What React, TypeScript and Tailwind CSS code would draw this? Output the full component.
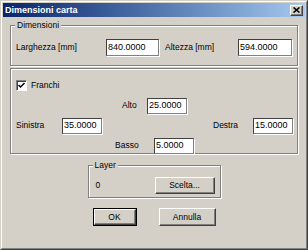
import React from "react";

const Field = ({ value, w, h = "h-[16px]" }: { value: string; w: string; h?: string }) => (
  <div
    className={`${w} ${h} bg-white border border-t-[#404040] border-l-[#404040] border-b-[#808080] border-r-[#808080] shadow-[1px_1px_0_white] flex items-center pl-[1px] text-[9px] leading-none text-black`}
  >
    {value}
  </div>
);

const Group = ({
  label,
  className,
  children,
}: {
  label?: string;
  className: string;
  children: React.ReactNode;
}) => (
  <div
    className={`relative border border-[#808080] shadow-[inset_1px_1px_0_white,1px_1px_0_white] ${className}`}
  >
    {label && (
      <span className="absolute -top-[6px] left-[4px] px-[2px] bg-[#d4d0c8] text-[8.5px] leading-[11px]">
        {label}
      </span>
    )}
    {children}
  </div>
);

const Button = ({
  label,
  w,
  h,
  def,
}: {
  label: string;
  w: string;
  h: string;
  def?: boolean;
}) => (
  <div className={`${w} ${h} ${def ? "border border-black" : ""} flex`}>
    <div className="flex-1 flex items-center justify-center border border-t-white border-l-white border-b-[#404040] border-r-[#404040] shadow-[inset_-1px_-1px_0_#808080] text-[8.5px] leading-none">
      {label}
    </div>
  </div>
);

export default function App() {
  return (
    <div className="w-[308px] h-[250px] bg-[#d4d0c8] text-black font-['Liberation_Sans',Arial,sans-serif] border border-t-[#d4d0c8] border-l-[#d4d0c8] border-b-[#404040] border-r-[#404040]">
      <div className="h-full border border-t-white border-l-white border-b-[#808080] border-r-[#808080] p-[1px] flex flex-col">
        {/* Title bar */}
        <div className="h-[14px] flex items-center bg-gradient-to-r from-[#0a246a] to-[#a6caf0] pl-[2px] pr-[2px]">
          <span className="text-white font-bold text-[9px] leading-none">Dimensioni carta</span>
          <div className="ml-auto w-[13px] h-[11px] bg-[#d4d0c8] border border-t-white border-l-white border-b-[#404040] border-r-[#404040] shadow-[inset_-1px_-1px_0_#808080] flex items-center justify-center">
            <svg width="7" height="6" viewBox="0 0 7 6">
              <path d="M0.5 0.5 L6.5 5.5 M6.5 0.5 L0.5 5.5" stroke="black" strokeWidth="1.6" />
            </svg>
          </div>
        </div>

        <div className="px-[7px] flex flex-col">
          {/* Dimensioni */}
          <Group label="Dimensioni" className="mt-[8px] h-[41px]">
            <div className="flex items-center pt-[13px] pl-[5px] text-[8.5px]">
              <span className="w-[90px]">Larghezza [mm]</span>
              <Field value="840.0000" w="w-[53px]" h="h-[17px]" />
              <span className="ml-[6px] w-[73px]">Altezza [mm]</span>
              <Field value="594.0000" w="w-[54px]" h="h-[17px]" />
            </div>
          </Group>

          {/* Franchi */}
          <Group className="mt-[2px] h-[86px]">
            <div className="flex flex-col text-[8.5px]">
              <div className="flex items-center pt-[10px] pl-[5px]">
                <div className="w-[11px] h-[11px] bg-white border border-t-[#808080] border-l-[#808080] border-b-white border-r-white shadow-[inset_1px_1px_0_#404040] flex items-center justify-center">
                  <svg width="7" height="7" viewBox="0 0 7 7">
                    <path d="M0.5 3 L2.5 5 L6.5 1" stroke="black" strokeWidth="1.5" fill="none" />
                  </svg>
                </div>
                <span className="ml-[4px]">Franchi</span>
              </div>
              <div className="flex items-center mt-[6px]">
                <span className="ml-[111px] w-[25px]">Alto</span>
                <Field value="25.0000" w="w-[40px]" />
              </div>
              <div className="flex items-center mt-[4px]">
                <span className="ml-[5px] w-[46px]">Sinistra</span>
                <Field value="35.0000" w="w-[40px]" />
                <span className="ml-[111px] w-[40px]">Destra</span>
                <Field value="15.0000" w="w-[40px]" />
              </div>
              <div className="flex items-center mt-[4px]">
                <span className="ml-[104px] w-[39px]">Basso</span>
                <Field value="5.0000" w="w-[40px]" />
              </div>
            </div>
          </Group>

          {/* Layer */}
          <div className="flex justify-center mt-[11px]">
            <Group label="Layer" className="w-[133px] h-[33px]">
              <div className="flex items-center pt-[11px] pl-[7px] pr-[5px] text-[8.5px]">
                <span>0</span>
                <div className="ml-auto">
                  <Button label="Scelta..." w="w-[60px]" h="h-[17px]" />
                </div>
              </div>
            </Group>
          </div>

          {/* Buttons */}
          <div className="flex justify-center gap-[22px] mt-[10px]">
            <Button label="OK" w="w-[44px]" h="h-[18px]" def />
            <Button label="Annulla" w="w-[57px]" h="h-[18px]" />
          </div>
        </div>
      </div>
    </div>
  );
}
